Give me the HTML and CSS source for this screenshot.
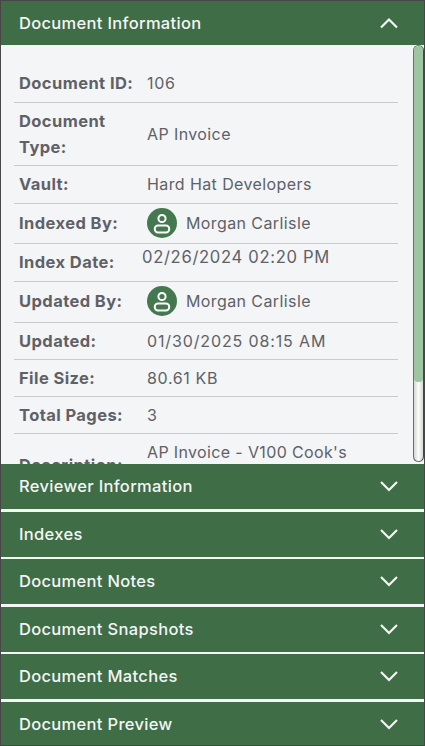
FILE: index.html
```html
<!DOCTYPE html>
<html lang="en">
<head>
<meta charset="utf-8">
<title>Document Information</title>
<link rel="stylesheet" href="styles.css">
</head>
<body>
<div class="accordion">
  <section class="section-open">
    <header class="bar bar-first">
      <span>Document Information</span>
      <svg class="chev" viewBox="0 0 20 12"><path d="M2 10.5 10 2.5l8 8"/></svg>
    </header>
    <div class="panel">
      <div class="rows">
        <div class="row r-id"><div class="label">Document ID:</div><div class="value value-num">106</div></div>
        <div class="row r-type"><div class="label">Document Type:</div><div class="value">AP Invoice</div></div>
        <div class="row r-vault"><div class="label">Vault:</div><div class="value">Hard Hat Developers</div></div>
        <div class="row r-user"><div class="label">Indexed By:</div><div class="value user">
          <svg class="avatar" viewBox="0 0 30 30"><circle cx="15" cy="15" r="15" fill="#44784f"/><circle cx="15" cy="10.5" r="3.6" fill="none" stroke="#fff" stroke-width="2"/><rect x="7.8" y="17.4" width="14.4" height="7" rx="3.2" fill="none" stroke="#fff" stroke-width="2"/></svg>
          <span>Morgan Carlisle</span></div></div>
        <div class="row r-date"><div class="label">Index Date:</div><div class="value value-shift">02/26/2024 02:20 PM</div></div>
        <div class="row r-user2"><div class="label">Updated By:</div><div class="value user">
          <svg class="avatar" viewBox="0 0 30 30"><circle cx="15" cy="15" r="15" fill="#44784f"/><circle cx="15" cy="10.5" r="3.6" fill="none" stroke="#fff" stroke-width="2"/><rect x="7.8" y="17.4" width="14.4" height="7" rx="3.2" fill="none" stroke="#fff" stroke-width="2"/></svg>
          <span>Morgan Carlisle</span></div></div>
        <div class="row r-std"><div class="label">Updated:</div><div class="value value-date">01/30/2025 08:15 AM</div></div>
        <div class="row r-std"><div class="label">File Size:</div><div class="value value-num">80.61 KB</div></div>
        <div class="row r-std"><div class="label">Total Pages:</div><div class="value value-num">3</div></div>
        <div class="row r-desc"><div class="label">Description:</div><div class="value value-top">AP Invoice - V100 Cook's</div></div>
      </div>
      <div class="scrollbar"><div class="thumb"></div></div>
    </div>
  </section>
  <section class="bar"><span>Reviewer Information</span><svg class="chev" viewBox="0 0 20 12"><path d="M2 2l8 8 8-8"/></svg></section>
  <section class="bar gap-wide"><span>Indexes</span><svg class="chev" viewBox="0 0 20 12"><path d="M2 2l8 8 8-8"/></svg></section>
  <section class="bar gap-narrow"><span>Document Notes</span><svg class="chev" viewBox="0 0 20 12"><path d="M2 2l8 8 8-8"/></svg></section>
  <section class="bar gap-wide"><span>Document Snapshots</span><svg class="chev" viewBox="0 0 20 12"><path d="M2 2l8 8 8-8"/></svg></section>
  <section class="bar gap-narrow"><span>Document Matches</span><svg class="chev" viewBox="0 0 20 12"><path d="M2 2l8 8 8-8"/></svg></section>
  <section class="bar gap-wide bar-last"><span>Document Preview</span><svg class="chev" viewBox="0 0 20 12"><path d="M2 2l8 8 8-8"/></svg></section>
</div>
</body>
</html>
```
FILE: styles.css
```css
* { box-sizing: border-box; }
html, body { margin: 0; height: 100%; }
body {
  font-family: Inter, "Liberation Sans", sans-serif;
  background: #f3f5f7;
  overflow: hidden;
}
.accordion {
  width: 425px;
  height: 746px;
  border: 1px solid #474747;
  display: flex;
  flex-direction: column;
  background: #f3f5f7;
  overflow: hidden;
}
.bar {
  display: flex;
  align-items: center;
  justify-content: space-between;
  flex: none;
  height: 45px;
  padding: 0 25px 1px 18px;
  background: #3f6d45;
  color: #f3f5f7;
  font-size: 16.5px;
  letter-spacing: 0.32px;
  font-weight: 500;
}
.bar-first { height: 44px; padding-bottom: 0; }
.gap-wide { margin-top: 3px; }
.gap-narrow { margin-top: 2px; }
.bar-last { height: 43px; padding-bottom: 0; }
.chev { width: 20px; height: 12px; fill: none; stroke: #f3f5f7; stroke-width: 2.2; }
.section-open { display: flex; flex-direction: column; height: 463px; flex: none; }
.panel { position: relative; flex: 1; overflow: hidden; }
.rows { padding: 19px 0 0 13px; width: 397px; }
.row {
  display: flex;
  align-items: center;
  padding: 0 5px;
  border-bottom: 1px solid #c9cbce;
  font-size: 16px;
  color: #5f6166;
}
.label { width: 128px; flex: none; font-size: 16.5px; letter-spacing: 0.42px; font-weight: 700; line-height: 26px; }
.value { flex: 1; line-height: 22px; letter-spacing: 0.4px; }
.value-num { letter-spacing: 0.65px; }
.value-date { letter-spacing: 0.87px; }
.value-top { align-self: flex-start; margin-top: 7px; letter-spacing: 0.36px; }
.r-id { height: 39px; }
.r-type { height: 62.5px; }
.r-vault { height: 38px; }
.r-user { height: 40px; padding-bottom: 1px; }
.r-date { height: 38px; }
.r-user2 { height: 41px; padding-bottom: 1px; }
.r-std { height: 37.2px; }
.r-desc { height: 62px; }
.user { display: flex; align-items: center; gap: 9px; }
.avatar { width: 30px; height: 30px; flex: none; }
.value-shift { margin-left: -5px; font-size: 16.6px; letter-spacing: 0.68px; position: relative; top: -5px; }
.scrollbar {
  position: absolute;
  top: 0;
  right: 0;
  width: 11px;
  height: 417px;
  background: linear-gradient(90deg, #d4d8d4, #fbfbfb 50%, #d4d8d4);
  border: 1px solid #6e6e6e;
  border-right-color: #474747;
  border-radius: 6px;
  overflow: hidden;
}
.thumb { height: 336px; background: #9cc5a0; border-radius: 0 0 4px 4px; }
```
